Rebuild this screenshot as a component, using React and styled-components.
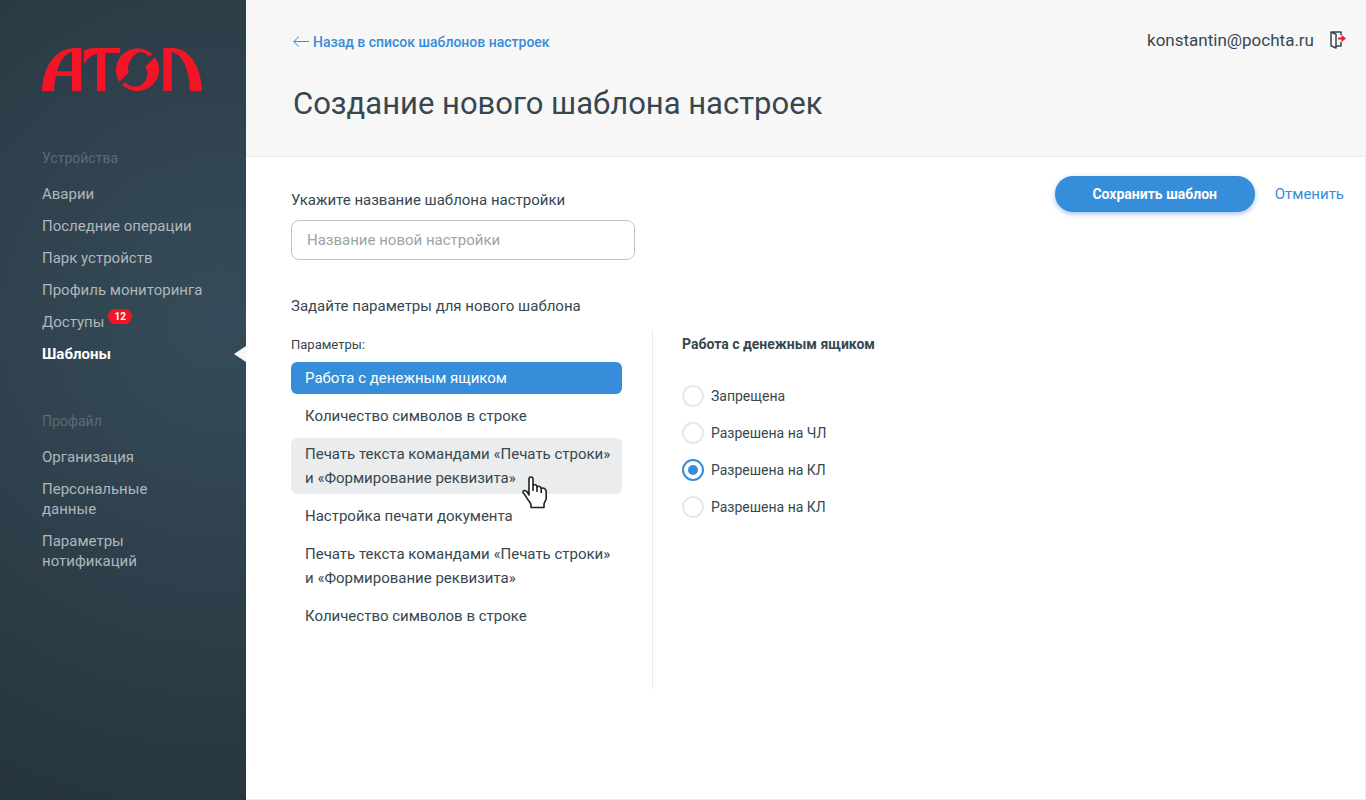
import React, { useState } from 'react';
import styled, { createGlobalStyle } from 'styled-components';

const GlobalStyle = createGlobalStyle`
  *, *::before, *::after { box-sizing: border-box; }
  body {
    margin: 0;
    background: #fff;
    color: #37474f;
    font-family: Roboto, "Open Sans", sans-serif;
    font-size: 15px;
    line-height: 20px;
  }
  button, input { font: inherit; }
  a { text-decoration: none; }
`;

const Page = styled.div`
  display: flex;
  min-height: 100vh;
`;

const Sidebar = styled.aside`
  flex: 0 0 246px;
  padding: 47px 0 40px 42px;
  background: radial-gradient(circle 560px at 220px 320px, #364b59 0%, #2d3e49 55%, #24333b 100%);
`;

const LogoLink = styled.a`
  display: block;
  height: 46px;
  margin-bottom: 55px;
`;

const NavGroup = styled.nav`
  margin-bottom: 47px;
`;

const NavTitle = styled.h2`
  margin: 0 0 16px;
  font-size: 14px;
  font-weight: 400;
  color: #5b6b75;
`;

const NavList = styled.ul`
  display: flex;
  flex-direction: column;
  gap: 12px;
  margin: 0;
  padding: 0;
  list-style: none;
`;

const NavItem = styled.li`
  display: flex;
  align-items: center;
  justify-content: space-between;
`;

const NavLink = styled.a`
  display: flex;
  max-width: 180px;
  color: ${p => (p.$active ? '#fff' : '#afb7bc')};
  font-weight: ${p => (p.$active ? 700 : 400)};
  white-space: pre-line;
`;

const Badge = styled.span`
  align-self: flex-start;
  height: 15px;
  margin: -3px 0 0 4px;
  padding: 0 6px;
  border-radius: 8px;
  background: #f31426;
  color: #fff;
  font-size: 10px;
  font-weight: 700;
  line-height: 15px;
`;

const Pointer = styled.span`
  border: solid transparent;
  border-width: 8px 12px 8px 0;
  border-right-color: #f7f7f7;
`;

const Main = styled.main`
  flex: 1;
  display: flex;
  flex-direction: column;
  min-width: 0;
`;

const Header = styled.header`
  display: flex;
  justify-content: space-between;
  align-items: flex-start;
  padding: 30px 20px 32px 47px;
  background: #f7f7f7;
`;

const BackLink = styled.a`
  display: inline-flex;
  align-items: center;
  gap: 4px;
  height: 24px;
  color: #368dd9;
  font-size: 14px;
  font-weight: 500;
`;

const Title = styled.h1`
  margin: 30px 0 0;
  font-size: 31px;
  line-height: 40px;
  font-weight: 400;
`;

const Account = styled.div`
  display: flex;
  align-items: center;
  gap: 15px;
  height: 20px;
  font-size: 17px;
`;

const IconButton = styled.button`
  display: flex;
  padding: 0;
  border: 0;
  background: none;
  cursor: pointer;
`;

const Content = styled.section`
  flex: 1;
  display: flex;
  justify-content: space-between;
  align-items: flex-start;
  padding: 19px 21px 40px 45px;
  border: solid #ececec;
  border-width: 1px 1px 1px 0;
`;

const Form = styled.form`
  padding-top: 14px;
`;

const Label = styled.label`
  display: block;
  margin-bottom: 10px;
`;

const TextInput = styled.input`
  display: block;
  width: 344px;
  height: 40px;
  padding: 0 15px;
  border: 1px solid #bfc6ca;
  border-radius: 8px;
  background: #fff;
  color: #37474f;
  &::placeholder { color: #9ba4a9; opacity: 1; }
`;

const SectionTitle = styled.h2`
  margin: 36px 0 14px;
  font-size: 15px;
  line-height: 20px;
  font-weight: 400;
`;

const Columns = styled.div`
  display: flex;
`;

const ParamColumn = styled.div`
  width: 362px;
  min-height: 359px;
  padding-right: 30px;
  border-right: 1px solid #e9ebec;
`;

const ParamCaption = styled.h3`
  margin: 5px 0 7px;
  font-size: 13px;
  line-height: 20px;
  font-weight: 400;
`;

const ParamList = styled.ul`
  display: flex;
  flex-direction: column;
  gap: 6px;
  margin: 0;
  padding: 0;
  list-style: none;
`;

const ParamItem = styled.li`
  position: relative;
`;

const tone = {
  active: { bg: '#368dd9', fg: '#fff' },
  hover: { bg: '#ebeced', fg: '#37474f' },
  plain: { bg: 'transparent', fg: '#37474f' },
};

const ParamButton = styled.button`
  display: block;
  width: 100%;
  padding: 4px 4px 4px 14px;
  border: 0;
  border-radius: 6px;
  background: ${p => tone[p.$tone].bg};
  color: ${p => tone[p.$tone].fg};
  line-height: 24px;
  text-align: left;
  white-space: pre-line;
  cursor: pointer;
`;

const HandCursor = styled.svg`
  position: absolute;
  left: 231px;
  top: 38px;
  z-index: 1;
  pointer-events: none;
`;

const Options = styled.fieldset`
  display: flex;
  flex-direction: column;
  gap: 15px;
  min-width: 0;
  margin: 0;
  padding: 4px 0 0 29px;
  border: 0;
  font-size: 14px;
`;

const Legend = styled.legend`
  float: left;
  margin-bottom: 16px;
  padding: 0;
  font-weight: 700;
`;

const Option = styled.label`
  display: flex;
  align-items: center;
  gap: 7px;
  height: 22px;
  cursor: pointer;
`;

const Radio = styled.input`
  appearance: none;
  display: grid;
  place-items: center;
  width: 22px;
  height: 22px;
  margin: 0;
  border: 2px solid #e5e9eb;
  border-radius: 50%;
  background: #fff;
  &:checked { border-color: #368dd9; }
  &:checked::before {
    content: "";
    width: 10px;
    height: 10px;
    border-radius: 50%;
    background: #368dd9;
  }
`;

const Actions = styled.div`
  display: flex;
  align-items: center;
  gap: 20px;
`;

const SaveButton = styled.button`
  width: 200px;
  height: 36px;
  padding: 0;
  border: 0;
  border-radius: 18px;
  background: #368dd9;
  box-shadow: 0 2px 5px rgba(54, 125, 217, 0.45);
  color: #fff;
  font-size: 14px;
  font-weight: 700;
  cursor: pointer;
`;

const CancelLink = styled.a`
  color: #368dd9;
`;

function Logo() {
  return (
    <svg width="160" height="46" viewBox="0 0 480 138" fill="#f31426" role="img" aria-label="АТОЛ">
      <path fillRule="evenodd" d="M0 132C2 64 38 3 98 3H118V132H90V87H42Q36 106 36 132ZM45 73H90V14C68 20 52 44 45 73Z" />
      <path d="M126 51V10Q142 3 162 3H234V18H190V132H165V21Q142 24 126 51Z" />
      <path d="M332 22A65 65 0 0 0 222 68A65 65 0 0 0 232 104L261 76L257 67C260 42 274 20 294 16Q310 14 319 29Z" />
      <path d="M338 30A65 65 0 0 1 351 68A65 65 0 0 1 241 114L249 106C262 118 276 122 290 118C308 112 318 92 316 71L309 60Z" />
      <path d="M364 3H396C444 6 478 62 480 132H444C444 76 424 22 389 15V132H364Z" />
    </svg>
  );
}

const devices = [
  { text: 'Аварии' },
  { text: 'Последние операции' },
  { text: 'Парк устройств' },
  { text: 'Профиль мониторинга' },
  { text: 'Доступы', badge: 12 },
  { text: 'Шаблоны', active: true },
];

const profile = [
  { text: 'Организация' },
  { text: 'Персональные\nданные' },
  { text: 'Параметры\nнотификаций' },
];

const params = [
  'Работа с денежным ящиком',
  'Количество символов в строке',
  'Печать текста командами «Печать строки»\nи «Формирование реквизита»',
  'Настройка печати документа',
  'Печать текста командами «Печать строки»\nи «Формирование реквизита»',
  'Количество символов в строке',
];

const options = ['Запрещена', 'Разрешена на ЧЛ', 'Разрешена на КЛ', 'Разрешена на КЛ'];

function Nav({ title, items }) {
  return (
    <NavGroup aria-label={title}>
      <NavTitle>{title}</NavTitle>
      <NavList>
        {items.map(item => (
          <NavItem key={item.text}>
            <NavLink href="#" $active={item.active}>
              {item.text}
              {item.badge && <Badge>{item.badge}</Badge>}
            </NavLink>
            {item.active && <Pointer />}
          </NavItem>
        ))}
      </NavList>
    </NavGroup>
  );
}

export default function App() {
  const [selected, setSelected] = useState(0);
  const [option, setOption] = useState(2);
  const hovered = 2;

  return (
    <>
      <GlobalStyle />
      <Page>
        <Sidebar>
          <LogoLink href="#"><Logo /></LogoLink>
          <Nav title="Устройства" items={devices} />
          <Nav title="Профайл" items={profile} />
        </Sidebar>
        <Main>
          <Header>
            <div>
              <BackLink href="#">
                <svg width="16" height="12" viewBox="0 0 16 12" fill="none" stroke="#368dd9" aria-hidden="true">
                  <path d="M16 5.5H.8M6 .5L.8 5.5L6 10.8" />
                </svg>
                Назад в список шаблонов настроек
              </BackLink>
              <Title>Создание нового шаблона настроек</Title>
            </div>
            <Account>
              konstantin@pochta.ru
              <IconButton type="button" aria-label="Выйти">
                <svg width="17" height="18" viewBox="0 0 17 18" fill="none" stroke="#37474f" strokeWidth="1.5" strokeLinejoin="round">
                  <path d="M2 1L7 3.2V17L2 14.8ZM2 1H12V4.2M12 10.8V14.9H7" />
                  <path d="M9 7.5H13" stroke="#f31426" strokeWidth="2" />
                  <path d="M12.5 4L17 7.5L12.5 11Z" fill="#f31426" stroke="none" />
                </svg>
              </IconButton>
            </Account>
          </Header>
          <Content>
            <Form id="template-form" onSubmit={e => e.preventDefault()}>
              <Label htmlFor="template-name">Укажите название шаблона настройки</Label>
              <TextInput id="template-name" type="text" placeholder="Название новой настройки" />
              <SectionTitle>Задайте параметры для нового шаблона</SectionTitle>
              <Columns>
                <ParamColumn>
                  <ParamCaption>Параметры:</ParamCaption>
                  <ParamList>
                    {params.map((text, i) => (
                      <ParamItem key={i}>
                        <ParamButton
                          type="button"
                          $tone={i === selected ? 'active' : i === hovered ? 'hover' : 'plain'}
                          onClick={() => setSelected(i)}
                        >
                          {text}
                        </ParamButton>
                        {i === hovered && (
                          <HandCursor width="26" height="33" viewBox="0 0 26 33" fill="#fff" stroke="#231f20" strokeWidth="1.6" strokeLinejoin="round" aria-hidden="true">
                            <path d="M7 19V3.2C7 .3 11 .3 11 3.2V9.5C12.5 8 15 8.8 15 11C16.5 9.6 19 10.4 19.2 12.6C21 11.4 24.2 12.4 24.2 15.5V22C24.2 25 22 26 22 28.5V31.5H9V29C9 26.5 5 23.5 4 20.5L1 16.4C.6 14 4 14 5.2 16Z" />
                            <path d="M11 9.5V15M15 11V16M19.2 12.6V17" />
                          </HandCursor>
                        )}
                      </ParamItem>
                    ))}
                  </ParamList>
                </ParamColumn>
                <Options>
                  <Legend>Работа с денежным ящиком</Legend>
                  {options.map((text, i) => (
                    <Option key={i}>
                      <Radio type="radio" name="drawer" checked={option === i} onChange={() => setOption(i)} />
                      {text}
                    </Option>
                  ))}
                </Options>
              </Columns>
            </Form>
            <Actions>
              <SaveButton type="submit" form="template-form">Сохранить шаблон</SaveButton>
              <CancelLink href="#">Отменить</CancelLink>
            </Actions>
          </Content>
        </Main>
      </Page>
    </>
  );
}
